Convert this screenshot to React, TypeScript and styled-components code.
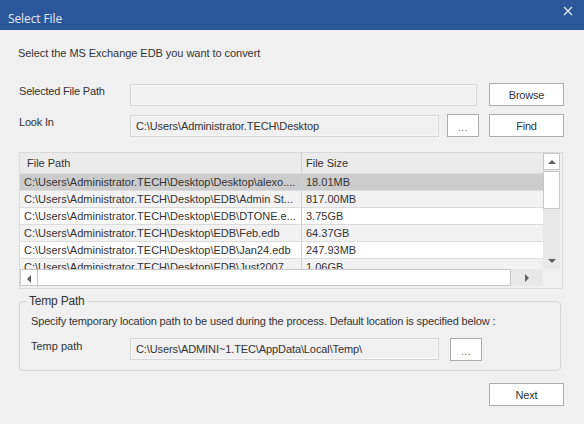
import React from "react";
import styled, { createGlobalStyle } from "styled-components";

const Global = createGlobalStyle`
  html, body { margin: 0; padding: 0; background: #f0f0f0; }
  body { font-family: "Liberation Sans", Arial, sans-serif; }
  * { box-sizing: border-box; }
`;

const Window = styled.div`
  width: 584px;
  height: 424px;
  background: #f0f0f0;
  display: flex;
  flex-direction: column;
  overflow: hidden;
  color: #333;
  font-size: 11px;
  letter-spacing: -0.2px;
`;

const TitleBar = styled.div`
  height: 30px;
  flex: none;
  background: #2b579a;
  display: flex;
  align-items: center;
  justify-content: space-between;
  padding: 0 11px 0 8px;
`;

const Title = styled.span`
  font-family: "Open Sans", "Noto Sans", sans-serif;
  font-size: 12px;
  letter-spacing: -0.1px;
  color: #e4e9f2;
  margin-top: 6px;
`;

const Close = styled.span`
  width: 10px;
  height: 10px;
  align-self: flex-start;
  margin-top: 6px;
  display: flex;
`;

const Body = styled.div`
  flex: 1;
  display: flex;
  flex-direction: column;
  padding: 16px 20px 0 19px;
`;

const Intro = styled.div`
  margin-left: -1px;
  height: 14px;
  line-height: 14px;
  letter-spacing: -0.05px;
`;

const FormRow = styled.div<{ $top: number }>`
  display: flex;
  align-items: center;
  margin-top: ${(p) => p.$top}px;
  height: 23px;
`;

const Label = styled.div`
  width: 111px;
  flex: none;
  align-self: flex-start;
  padding-top: 2px;
`;

const Field = styled.div<{ $w: number }>`
  width: ${(p) => p.$w}px;
  height: 22px;
  flex: none;
  border: 1px solid #d6d6d6;
  box-shadow: inset 0 0 0 1px #f7f7f7;
  background: #f0f0f0;
  display: flex;
  align-items: center;
  padding-left: 5px;
  font-size: 11px;
  letter-spacing: -0.1px;
  color: #333;
  white-space: nowrap;
  overflow: hidden;
`;

const Button = styled.button<{ $w: number; $ml: number }>`
  width: ${(p) => p.$w}px;
  height: 23px;
  margin-left: ${(p) => p.$ml}px;
  flex: none;
  border: 1px solid #adadad;
  background: #fff;
  color: #333;
  font-family: "Liberation Sans", Arial, sans-serif;
  font-size: 11px;
  letter-spacing: -0.2px;
  padding: 0;
  display: flex;
  align-items: center;
  justify-content: center;
`;

const Dots = styled.span`
  font-size: 10px;
  color: #666;
  margin-top: 3px;
  letter-spacing: 0.5px;
`;

const ListFrame = styled.div`
  margin-top: 15px;
  width: 544px;
  height: 137px;
  border: 1px solid #d9d9d9;
  background: #f0f0f0;
  display: flex;
  padding: 0 2px 2px 0;
`;

const ListMain = styled.div`
  width: 523px;
  display: flex;
  flex-direction: column;
`;

const Rows = styled.div`
  flex: 1;
  overflow: hidden;
  background: #fff;
`;

const GridRow = styled.div<{ $bg: string; $h: number }>`
  display: grid;
  grid-template-columns: 281px 1fr;
  height: ${(p) => p.$h}px;
  background: ${(p) => p.$bg};
  border-bottom: 1px solid #dcdcdc;
`;

const Cell = styled.div<{ $head?: boolean }>`
  display: flex;
  align-items: center;
  padding-left: ${(p) => (p.$head ? 7 : 4)}px;
  font-size: 11px;
  letter-spacing: 0;
  white-space: nowrap;
  overflow: hidden;
  color: #333;
  & + & {
    border-left: 1px solid #d0d0d0;
    padding-left: 4px;
  }
`;

const HScroll = styled.div`
  height: 17px;
  flex: none;
  display: flex;
  background: #e8e8e8;
`;

const HBar = styled.div`
  flex: 1;
  display: flex;
  border: 1px solid #c6c6c6;
  background: #fff;
`;

const ArrowBox = styled.div<{ $boxed?: boolean; $w?: number }>`
  width: ${(p) => p.$w ?? 17}px;
  height: 17px;
  flex: none;
  display: flex;
  align-items: center;
  justify-content: center;
  ${(p) => (p.$boxed ? "border-right: 1px solid #c6c6c6;" : "")}
`;

const VScroll = styled.div`
  width: 17px;
  display: flex;
  flex-direction: column;
  background: #e8e8e8;
`;

const VTrackArea = styled.div`
  flex: 1;
  display: flex;
  flex-direction: column;
`;

const UpBtn = styled.div`
  height: 17px;
  border: 1px solid #c6c6c6;
  background: #fff;
  display: flex;
  align-items: center;
  justify-content: center;
`;

const Thumb = styled.div`
  height: 38px;
  margin-top: 1px;
  border: 1px solid #c6c6c6;
  background: #fff;
`;

const Spacer = styled.div`
  flex: 1;
`;

const DownBtn = styled.div`
  height: 17px;
  display: flex;
  align-items: center;
  justify-content: center;
`;

const Corner = styled.div`
  height: 17px;
  flex: none;
  background: #f0f0f0;
`;

const Group = styled.fieldset`
  margin: 5px 0 0 0;
  width: 542px;
  height: 77px;
  border: 1px solid #d5d5d5;
  border-radius: 4px;
  padding: 0 0 0 11px;
  display: flex;
  flex-direction: column;
`;

const Legend = styled.legend`
  margin-left: -4px;
  padding: 0 2px;
  font-size: 12px;
  letter-spacing: -0.2px;
  color: #333;
`;

const GroupText = styled.div`
  margin-top: 7px;
  font-size: 11px;
  letter-spacing: -0.15px;
`;

const GroupRow = styled.div`
  display: flex;
  margin-top: 11px;
  height: 23px;
`;

const GroupLabel = styled.div`
  width: 99px;
  flex: none;
  font-size: 11px;
  letter-spacing: 0;
  padding-top: 2px;
`;

const Footer = styled.div`
  display: flex;
  justify-content: flex-end;
  margin-top: 12px;
`;

const Tri = ({ dir }: { dir: "up" | "down" | "left" | "right" }) => {
  const pts = {
    up: "0,5 4,1 8,5",
    down: "0,1 4,5 8,1",
    left: "5,0 1,4 5,8",
    right: "1,0 5,4 1,8",
  }[dir];
  const vertical = dir === "up" || dir === "down";
  return (
    <svg width={vertical ? 8 : 6} height={vertical ? 6 : 8} viewBox={vertical ? "0 0 8 6" : "0 0 6 8"}>
      <polygon points={pts} fill="#606060" />
    </svg>
  );
};

const files: [string, string][] = [
  ["C:\\Users\\Administrator.TECH\\Desktop\\Desktop\\alexo....", "18.01MB"],
  ["C:\\Users\\Administrator.TECH\\Desktop\\EDB\\Admin St...", "817.00MB"],
  ["C:\\Users\\Administrator.TECH\\Desktop\\EDB\\DTONE.e...", "3.75GB"],
  ["C:\\Users\\Administrator.TECH\\Desktop\\EDB\\Feb.edb", "64.37GB"],
  ["C:\\Users\\Administrator.TECH\\Desktop\\EDB\\Jan24.edb", "247.93MB"],
  ["C:\\Users\\Administrator.TECH\\Desktop\\EDB\\Just2007...", "1.06GB"],
];

export default function App() {
  return (
    <>
      <Global />
      <Window>
        <TitleBar>
          <Title>Select File</Title>
          <Close>
            <svg width="10" height="10" viewBox="0 0 10 10">
              <path d="M1 1 L9 9 M9 1 L1 9" stroke="#dfe5ef" strokeWidth="1.4" />
            </svg>
          </Close>
        </TitleBar>
        <Body>
          <Intro>Select the MS Exchange EDB you want to convert</Intro>
          <FormRow $top={23}>
            <Label>Selected File Path</Label>
            <Field $w={347} />
            <Button $w={75} $ml={12}>Browse</Button>
          </FormRow>
          <FormRow $top={8}>
            <Label>Look In</Label>
            <Field $w={309}>C:\Users\Administrator.TECH\Desktop</Field>
            <Button $w={32} $ml={8}><Dots>...</Dots></Button>
            <Button $w={75} $ml={10}>Find</Button>
          </FormRow>
          <ListFrame>
            <ListMain>
              <GridRow $bg="#ebebeb" $h={21}>
                <Cell $head>File Path</Cell>
                <Cell>File Size</Cell>
              </GridRow>
              <Rows>
                {files.map(([p, s], i) => (
                  <GridRow key={i} $h={17} $bg={i === 0 ? "#cccccc" : i % 2 === 1 ? "#f2f2f2" : "#ffffff"}>
                    <Cell>{p}</Cell>
                    <Cell>{s}</Cell>
                  </GridRow>
                ))}
              </Rows>
              <HScroll>
                <HBar>
                  <ArrowBox $boxed><Tri dir="left" /></ArrowBox>
                </HBar>
                <ArrowBox $w={32}><Tri dir="right" /></ArrowBox>
              </HScroll>
            </ListMain>
            <VScroll>
              <VTrackArea>
                <UpBtn><Tri dir="up" /></UpBtn>
                <Thumb />
                <Spacer />
                <DownBtn><Tri dir="down" /></DownBtn>
              </VTrackArea>
              <Corner />
            </VScroll>
          </ListFrame>
          <Group>
            <Legend>Temp Path</Legend>
            <GroupText>Specify temporary location path to be used during the process. Default location is specified below :</GroupText>
            <GroupRow>
              <GroupLabel>Temp path</GroupLabel>
              <Field $w={309}>C:\Users\ADMINI~1.TEC\AppData\Local\Temp\</Field>
              <Button $w={32} $ml={11}><Dots>...</Dots></Button>
            </GroupRow>
          </Group>
          <Footer>
            <Button $w={75} $ml={0}>Next</Button>
          </Footer>
        </Body>
      </Window>
    </>
  );
}
